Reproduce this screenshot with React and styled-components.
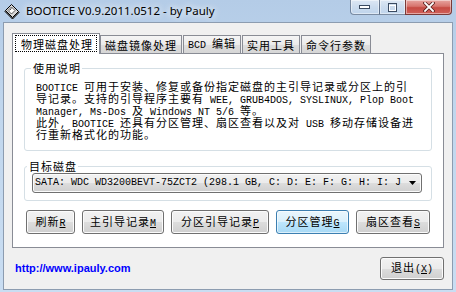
import React from 'react';
import styled, { createGlobalStyle } from 'styled-components';

const CJK = `"Noto Sans CJK SC", "Noto Sans", sans-serif`;
const MONO = `"Liberation Mono", "DejaVu Sans Mono", monospace`;

const GlobalStyle = createGlobalStyle`
  html, body { margin: 0; padding: 0; }
  body { width: 456px; height: 292px; overflow: hidden; background: #fff; }
  * { box-sizing: border-box; }
`;

const Window = styled.div`
  width: 456px;
  height: 292px;
  display: flex;
  flex-direction: column;
  padding: 0 3px 2px 3px;
  background: linear-gradient(180deg, #b4cce7 0%, #c0d6ed 35%, #c9ddf2 100%);
  font-family: ${CJK};
  color: #000;
`;

const TitleBar = styled.div`
  height: 22px;
  flex: none;
  display: flex;
  align-items: flex-start;
`;

const AppIcon = styled.svg`
  flex: none;
  margin: 3px 0 0 1px;
`;

const Title = styled.div`
  margin-left: 6px;
  font-family: "Noto Sans", sans-serif;
  font-size: 11.5px;
  line-height: 21px;
  white-space: nowrap;
  text-shadow: 0 0 6px #fff, 0 0 10px rgba(255, 255, 255, 0.8);
`;

const CaptionButtons = styled.div`
  margin-left: auto;
  margin-right: 1px;
  display: flex;
  height: 15px;
`;

const CaptionButton = styled.div`
  width: ${p => p.$w}px;
  height: 15px;
  margin-left: -1px;
  display: flex;
  align-items: center;
  justify-content: center;
  border: 1px solid ${p => (p.$close ? '#7a3a38' : 'rgba(45, 65, 95, 0.55)')};
  border-top: none;
  border-radius: ${p => (p.$first ? '0 0 0 4px' : p.$close ? '0 0 4px 0' : '0')};
  background: ${p =>
    p.$close
      ? 'linear-gradient(180deg, #e7a6a1 0%, #d7746d 45%, #c64b43 55%, #d0615a 100%)'
      : 'linear-gradient(180deg, rgba(255,255,255,0.55) 0%, rgba(255,255,255,0.3) 50%, rgba(210,226,244,0.35) 100%)'};
  box-shadow: inset 0 0 0 1px rgba(255, 255, 255, 0.45);
`;

const Client = styled.div`
  flex: 1;
  display: flex;
  flex-direction: column;
  background: #f0f0f0;
  border: 1px solid #8c9cb0;
  padding: 10px 8px 9px 8px;
`;

const TabStrip = styled.div`
  height: 20px;
  display: flex;
  align-items: flex-end;
`;

const ActiveTab = styled.div`
  position: relative;
  z-index: 1;
  height: 21px;
  margin-bottom: -1px;
  padding: 0 1px;
  display: flex;
  align-items: flex-start;
  background: #fff;
  border: 1px solid #898c95;
  border-bottom: none;
`;

const FocusBox = styled.div`
  margin: 1px 1px 0 1px;
  height: 17px;
  padding: 0 3px 0 5px;
  border: 1px dotted #000;
  display: flex;
  align-items: center;
`;

const Tab = styled.div`
  height: 18px;
  margin-left: ${p => p.$ml || 0}px;
  padding: 0 4px;
  display: flex;
  align-items: center;
  background: linear-gradient(180deg, #f5f5f5 0%, #ebebeb 50%, #dedede 51%, #d6d6d6 100%);
  border: 1px solid #898c95;
  border-bottom: none;
`;

const Label = styled.span`
  font-size: 11px;
  letter-spacing: 1px;
  line-height: 12px;
  white-space: nowrap;
`;

const Panel = styled.div`
  height: 195px;
  display: flex;
  flex-direction: column;
  background: #fff;
  border: 1px solid #898c95;
  padding: 8px 11px 0 11px;
`;

const Group = styled.fieldset`
  margin: ${p => p.$mt || 0}px 0 0 0;
  padding: ${p => p.$pad};
  border: 1px solid #d5dfe5;
  border-radius: 3px;
  min-inline-size: 0;
`;

const Legend = styled.legend`
  margin-left: -5px;
  padding: 0 1px 0 2px;
  font-size: 11px;
  letter-spacing: 1px;
  line-height: 12px;
`;

const Line = styled.div`
  height: 12px;
  font-size: 11px;
  letter-spacing: 1px;
  line-height: 12px;
  white-space: nowrap;
`;

const Lat = styled.span`
  font-family: ${MONO};
  font-size: 10px;
  letter-spacing: 0;
  line-height: 12px;
  text-decoration: ${p => (p.$u ? 'underline' : 'none')};
`;

const Combo = styled.div`
  height: 20px;
  display: flex;
  align-items: center;
  padding: 0 0 0 2px;
  border: 1px solid #707070;
  border-radius: 3px;
  background: linear-gradient(180deg, #f2f2f2 0%, #ebebeb 50%, #dddddd 51%, #cfcfcf 100%);
  box-shadow: inset 0 0 0 1px #fbfbfb;
  overflow: hidden;
`;

const ComboText = styled.div`
  flex: 1;
  overflow: hidden;
  white-space: nowrap;
  font-family: ${MONO};
  font-size: 10px;
  line-height: 12px;
`;

const ComboArrow = styled.svg`
  flex: none;
  margin: 0 5px 0 3px;
`;

const ButtonRow = styled.div`
  display: flex;
  gap: 7px;
  margin: 9px 0 0 2px;
`;

const Button = styled.div`
  width: ${p => p.$w}px;
  height: ${p => p.$h || 24}px;
  display: flex;
  align-items: center;
  justify-content: center;
  border: 1px solid ${p => (p.$hot ? '#3c7fb1' : '#707070')};
  border-radius: 3px;
  background: ${p =>
    p.$hot
      ? 'linear-gradient(180deg, #eaf6fd 0%, #d9f0fc 50%, #bee6fd 51%, #a7d9f5 100%)'
      : 'linear-gradient(180deg, #f2f2f2 0%, #ebebeb 50%, #dddddd 51%, #cfcfcf 100%)'};
  box-shadow: inset 0 0 0 1px ${p => (p.$hot ? 'rgba(255,255,255,0.6)' : '#fbfbfb')};
`;

const Footer = styled.div`
  height: 23px;
  margin-top: 9px;
  display: flex;
  align-items: center;
`;

const WebLink = styled.a`
  margin-left: 3px;
  margin-top: -2px;
  font-family: "Liberation Sans", Arial, sans-serif;
  font-weight: bold;
  font-size: 11px;
  color: #0000ff;
  text-decoration: none;
`;

const Spacer = styled.div`
  flex: 1;
`;

const mixed = text =>
  text
    .split(/([\x20-\x7e]+)/)
    .filter(Boolean)
    .map((s, i) =>
      /^[\x20-\x7e]+$/.test(s) ? <Lat key={i}>{s}</Lat> : <React.Fragment key={i}>{s}</React.Fragment>
    );

const tabs = ['磁盘镜像处理', 'BCD 编辑', '实用工具', '命令行参数'];

const lines = [
  'BOOTICE 可用于安装、修复或备份指定磁盘的主引导记录或分区上的引',
  '导记录。支持的引导程序主要有 WEE, GRUB4DOS, SYSLINUX, Plop Boot',
  'Manager, Ms-Dos 及 Windows NT 5/6 等。',
  '此外, BOOTICE 还具有分区管理、扇区查看以及对 USB 移动存储设备进',
  '行重新格式化的功能。',
];

const buttons = [
  { label: '刷新', key: 'R', w: 49 },
  { label: '主引导记录', key: 'M', w: 82 },
  { label: '分区引导记录', key: 'P', w: 98 },
  { label: '分区管理', key: 'G', w: 73, hot: true },
  { label: '扇区查看', key: 'S', w: 74 },
];

export default function App() {
  return (
    <>
      <GlobalStyle />
      <Window>
        <TitleBar>
          <AppIcon width="16" height="16" viewBox="0 0 16 16">
            <path d="M1 8.5 L7.5 2 L15 9.5 L8.5 16 Z" fill="#9a9a9a" stroke="#000" strokeWidth="1" />
            <path d="M1.5 7.5 L7.5 1.5 L14.5 8.5 L8.5 14.5 Z" fill="#d8d8d8" stroke="#000" strokeWidth="1" />
            <path d="M4 7.5 L7.5 4 L11 7.5 L7.5 11 Z" fill="#fff" stroke="#333" strokeWidth="0.8" />
            <path d="M5.5 7.5 L7.5 5.5" stroke="#555" strokeWidth="1" />
          </AppIcon>
          <Title>BOOTICE V0.9.2011.0512 - by Pauly</Title>
          <CaptionButtons>
            <CaptionButton $w={30} $first>
              <svg width="12" height="6" viewBox="0 0 12 6">
                <rect x="0.5" y="1.5" width="10" height="3" fill="#fff" stroke="#3a4a60" strokeWidth="1" />
              </svg>
            </CaptionButton>
            <CaptionButton $w={27}>
              <svg width="11" height="11" viewBox="0 0 11 11">
                <rect x="1.5" y="1.5" width="8" height="8" fill="none" stroke="#3a4a60" strokeWidth="1" />
                <rect x="2.5" y="3.5" width="6" height="5" fill="none" stroke="#fff" strokeWidth="1" />
              </svg>
            </CaptionButton>
            <CaptionButton $w={47} $close>
              <svg width="12" height="10" viewBox="0 0 12 10">
                <path d="M2 1 L10 9 M10 1 L2 9" stroke="#5a1f1c" strokeWidth="3.4" strokeLinecap="square" />
                <path d="M2 1 L10 9 M10 1 L2 9" stroke="#fff" strokeWidth="1.8" strokeLinecap="square" />
              </svg>
            </CaptionButton>
          </CaptionButtons>
        </TitleBar>
        <Client>
          <TabStrip>
            <ActiveTab>
              <FocusBox>
                <Label>物理磁盘处理</Label>
              </FocusBox>
            </ActiveTab>
            {tabs.map((t, i) => (
              <Tab key={t} $ml={i === 0 ? 0 : 1}>
                <Label>{mixed(t)}</Label>
              </Tab>
            ))}
          </TabStrip>
          <Panel>
            <Group $pad="6px 10px 10px 11px">
              <Legend>使用说明</Legend>
              {lines.map((l, i) => (
                <Line key={i}>{mixed(l)}</Line>
              ))}
            </Group>
            <Group $mt={9} $pad="1px 9px 7px 7px">
              <Legend>目标磁盘</Legend>
              <Combo>
                <ComboText>SATA: WDC WD3200BEVT-75ZCT2 (298.1 GB, C: D: E: F: G: H: I: J</ComboText>
                <ComboArrow width="7" height="4" viewBox="0 0 7 4">
                  <path d="M0 0 H7 L3.5 4 Z" fill="#000" />
                </ComboArrow>
              </Combo>
            </Group>
            <ButtonRow>
              {buttons.map(b => (
                <Button key={b.key} $w={b.w} $hot={b.hot}>
                  <Label>
                    {b.label}
                    <Lat $u>{b.key}</Lat>
                  </Label>
                </Button>
              ))}
            </ButtonRow>
          </Panel>
          <Footer>
            <WebLink href="#">http://www.ipauly.com</WebLink>
            <Spacer />
            <Button $w={64} $h={23}>
              <Label>
                退出<Lat>(<Lat $u>X</Lat>)</Lat>
              </Label>
            </Button>
          </Footer>
        </Client>
      </Window>
    </>
  );
}
